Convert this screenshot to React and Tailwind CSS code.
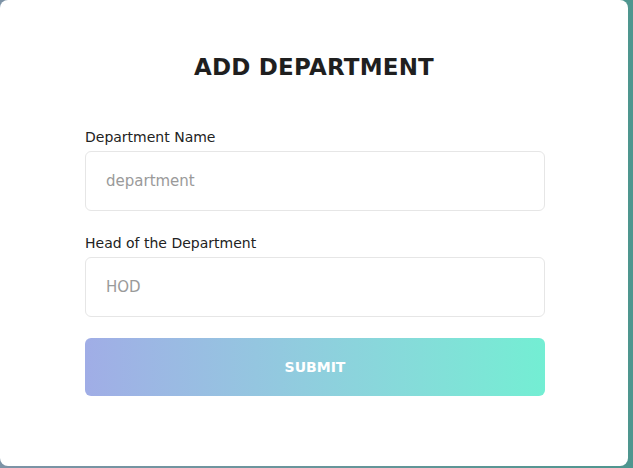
import React from 'react';

const font = { fontFamily: '"DejaVu Sans", "Liberation Sans", sans-serif' };

const Field = ({ label, placeholder }) => (
    <div className="flex flex-col">
        <label className="text-[14px] text-[#222] leading-[20px] mb-[4px]">{label}</label>
        <input
            type="text"
            placeholder={placeholder}
            className="h-[60px] w-full rounded-[6px] border border-[#e6e6e6] px-[20px] text-[15px] text-[#333] placeholder:text-[#9a9a9a] outline-none"
        />
    </div>
);

export default function App() {
    return (
        <div className="w-[633px] h-[468px] overflow-hidden bg-gradient-to-r from-[#7d93a6] to-[#4e968f]" style={font}>
            <div className="w-[628px] h-[466px] bg-white rounded-[8px] flex flex-col items-center pt-[52px]">
                <h2 className="text-[23px] font-bold text-[#1f1f1f] leading-[30px] tracking-[0.2px]">ADD DEPARTMENT</h2>

                <form className="w-[460px] self-start ml-[85px] mt-[45px] flex flex-col" onSubmit={e => e.preventDefault()}>
                    <Field label="Department Name" placeholder="department" />
                    <div className="h-[22px]" />
                    <Field label="Head of the Department" placeholder="HOD" />
                    <button
                        type="submit"
                        className="mt-[21px] h-[58px] w-full rounded-[6px] bg-gradient-to-r from-[#a0ade6] to-[#73eed3] text-white text-[14px] font-bold"
                    >
                        SUBMIT
                    </button>
                </form>
            </div>
        </div>
    );
}
